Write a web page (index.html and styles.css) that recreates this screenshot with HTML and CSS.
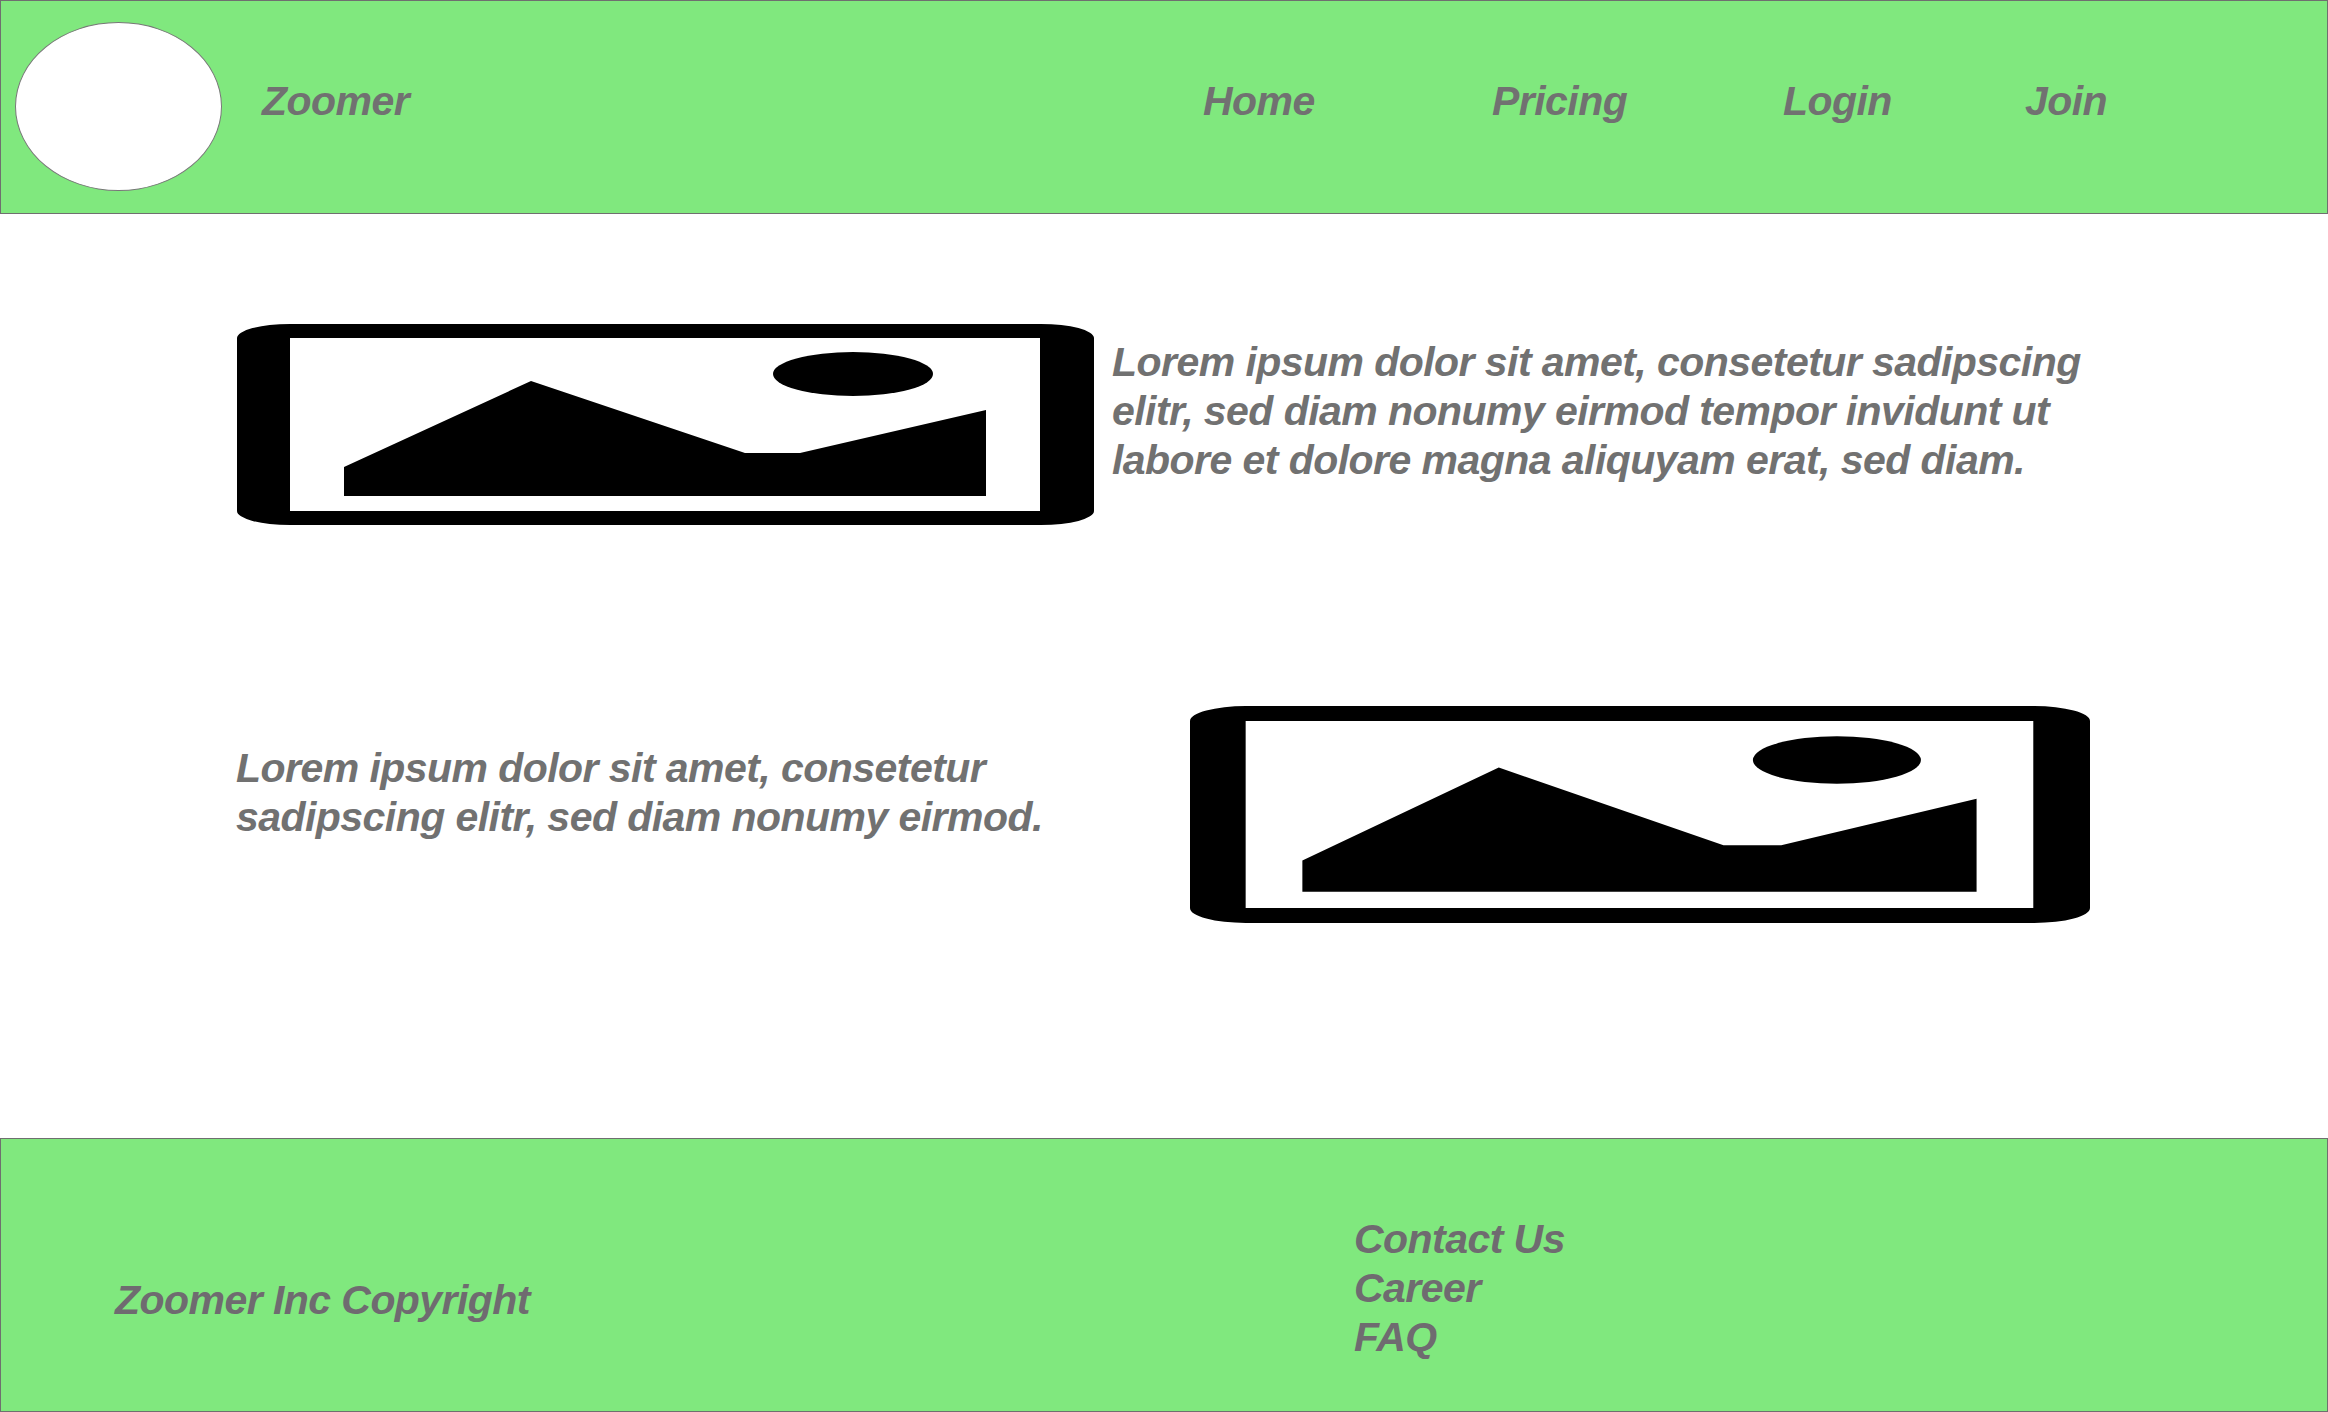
FILE: index.html
```html
<!DOCTYPE html>
<html lang="en">
<head>
    <meta charset="UTF-8">
    <meta name="viewport" content="width=device-width, initial-scale=1.0">
    <title>Zoomer</title>
    <link rel="stylesheet" href="styles.css">
</head>
<body>
    <header class="header">
        <div class="brand">
            <div class="logo"></div>
            <span class="brand-name">Zoomer</span>
        </div>
        <nav class="nav">
            <a>Home</a>
            <a>Pricing</a>
            <a>Login</a>
            <a>Join</a>
        </nav>
    </header>

    <main class="main">
        <section class="row row-first">
            <svg class="picture picture-small" viewBox="0 0 857 201" preserveAspectRatio="none">
                <path fill-rule="evenodd" d="M53 0H804A53 14 0 0 1 857 14V187A53 14 0 0 1 804 201H53A53 14 0 0 1 0 187V14A53 14 0 0 1 53 0ZM53 14V187H803V14Z"/>
                <path d="M107 143L294 57L508 129H563L749 86V172H107Z"/>
                <ellipse cx="616" cy="50" rx="80" ry="22"/>
            </svg>
            <p class="text">Lorem ipsum dolor sit amet, consetetur sadipscing<br>elitr, sed diam nonumy eirmod tempor invidunt ut<br>labore et dolore magna aliquyam erat, sed diam.</p>
        </section>
        <section class="row row-second">
            <p class="text">Lorem ipsum dolor sit amet, consetetur<br>sadipscing elitr, sed diam nonumy eirmod.</p>
            <svg class="picture picture-large" viewBox="0 0 857 201" preserveAspectRatio="none">
                <path fill-rule="evenodd" d="M53 0H804A53 14 0 0 1 857 14V187A53 14 0 0 1 804 201H53A53 14 0 0 1 0 187V14A53 14 0 0 1 53 0ZM53 14V187H803V14Z"/>
                <path d="M107 143L294 57L508 129H563L749 86V172H107Z"/>
                <ellipse cx="616" cy="50" rx="80" ry="22"/>
            </svg>
        </section>
    </main>

    <footer class="footer">
        <span class="copyright">Zoomer Inc Copyright</span>
        <div class="footer-links">
            <a>Contact Us</a>
            <a>Career</a>
            <a>FAQ</a>
        </div>
    </footer>
</body>
</html>
```

FILE: styles.css
```css
* {
    box-sizing: border-box;
}
body {
    font-family: "Liberation Sans", Arial, sans-serif;
    font-size: 41px;
    font-weight: bold;
    font-style: italic;
    line-height: 49px;
    letter-spacing: -0.55px;
    color: #717171;
    background-color: white;
    margin: 0;
    height: 1412px;
    display: flex;
    flex-direction: column;
    overflow: hidden;
}
.header {
    height: 214px;
    background-color: #80e87e;
    border: 1px solid #6f6f6f;
    padding-left: 14px;
    display: flex;
    align-items: center;
}
.brand {
    width: 1188px;
    display: flex;
    align-items: center;
    gap: 40px;
}
.brand-name {
    margin-bottom: 12px;
}
.logo {
    width: 207px;
    height: 169px;
    margin-top: -1px;
    background: white;
    border: 1px solid #777;
    border-radius: 50%;
}
.nav {
    display: grid;
    grid-template-columns: 289px 291px 242px auto;
    margin-bottom: 12px;
}
.main {
    flex: 1;
    padding-top: 110px;
    display: flex;
    flex-direction: column;
    gap: 181px;
}
.row {
    display: flex;
    align-items: flex-start;
}
.row-first {
    padding-left: 237px;
    gap: 18px;
}
.row-second {
    padding-left: 236px;
}
.row-second .text {
    width: 954px;
    margin-top: 38px;
}
.row-first .text {
    margin-top: 14px;
}
.text {
    margin: 0;
    white-space: nowrap;
}
.picture {
    display: block;
    flex: none;
}
.picture-small {
    width: 857px;
    height: 201px;
}
.picture-large {
    width: 900px;
    height: 217px;
}
.footer {
    height: 274px;
    background-color: #80e87e;
    border: 1px solid #6f6f6f;
    color: #6f6b70;
    padding-left: 114px;
    display: flex;
    align-items: flex-start;
}
.copyright {
    width: 1239px;
    margin-top: 137px;
}
.footer-links {
    margin-top: 76px;
    display: flex;
    flex-direction: column;
}
```
